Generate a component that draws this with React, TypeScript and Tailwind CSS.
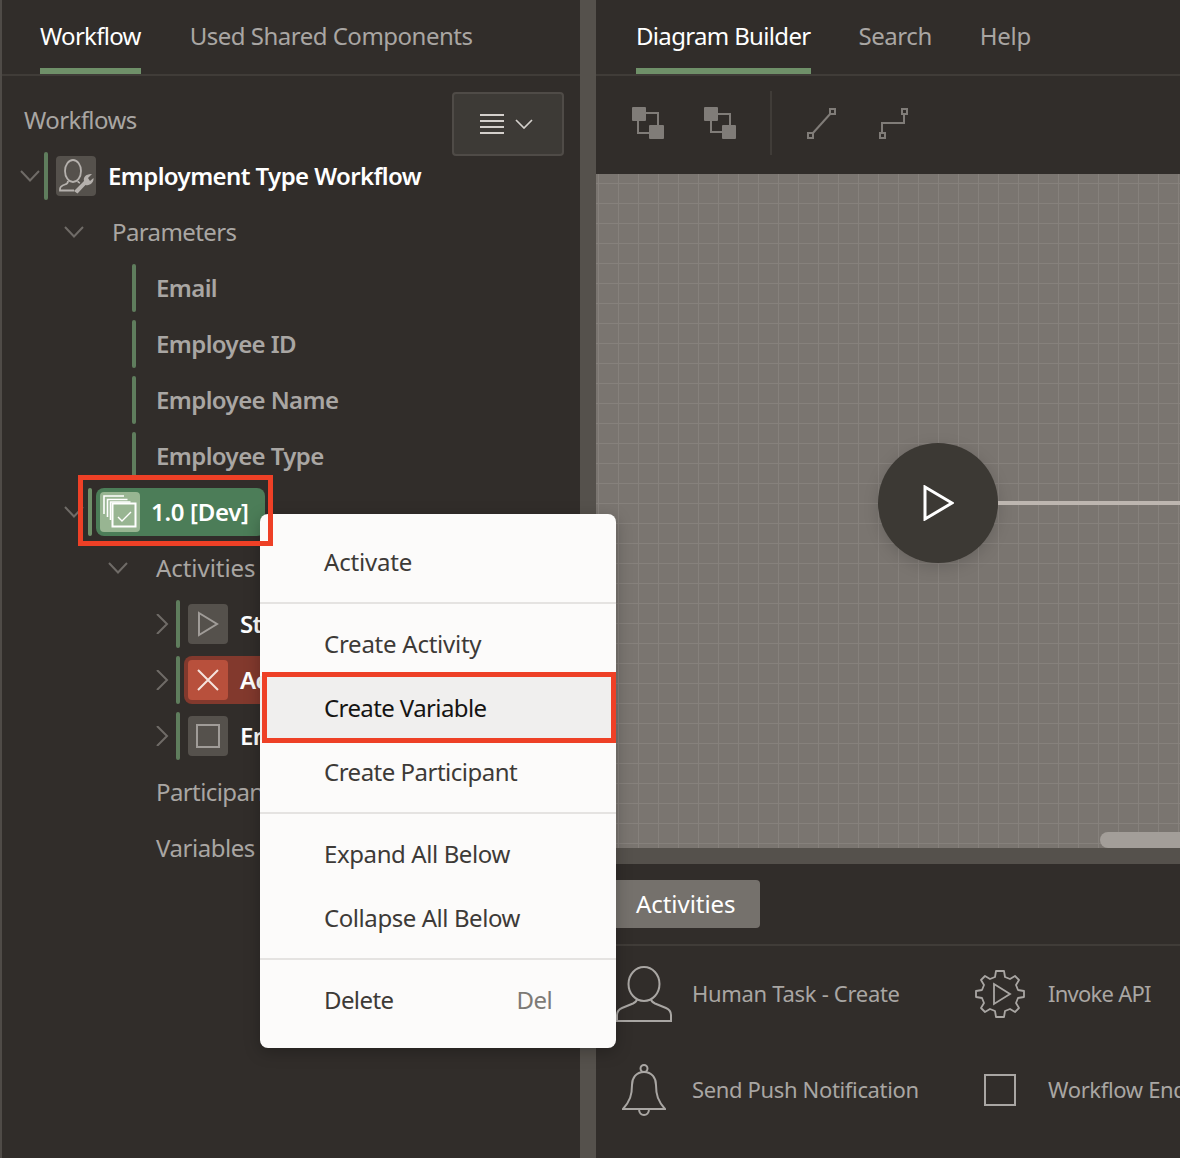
const Chev = ({ open, className }: { open?: boolean; className?: string }) => (
  <svg viewBox="0 0 20 20" className={"w-5 h-5 " + (className ?? "")} fill="none" stroke="#6f6b67" strokeWidth="2">
    {open ? <polyline points="1,5 10,14.5 19,5" /> : <polyline points="5,0 15,10 5,20" />}
  </svg>
);

const Bar = ({ dim }: { dim?: boolean }) => (
  <div className={"w-1 h-12 rounded-sm shrink-0 " + (dim ? "bg-[#5f7d5d]" : "bg-[#6b8a65]")} />
);

const Row = ({ children }: { children: React.ReactNode }) => (
  <div className="h-14 flex items-center relative">{children}</div>
);

const TreeIconBox = ({ className, children }: { className: string; children: React.ReactNode }) => (
  <div className={"w-10 h-10 rounded flex items-center justify-center shrink-0 " + className}>{children}</div>
);

const Param = ({ label }: { label: string }) => (
  <Row>
    <div className="ml-[130px]"><Bar dim /></div>
    <span className="ml-5 font-semibold text-[#a9a6a3]">{label}</span>
  </Row>
);

const Tab = ({ label, active, className }: { label: string; active?: boolean; className?: string }) => (
  <div className={"h-[74px] flex items-center pt-[4px] border-b-[6px] " + (active ? "text-white border-[#6f9069] " : "text-[#a9a6a3] border-transparent ") + (className ?? "")}>
    {label}
  </div>
);

const MenuItem = ({ label, shortcut, hover, className }: { label: string; shortcut?: string; hover?: boolean; className?: string }) => (
  <div className={"h-16 flex items-center justify-between pl-16 pr-16 " + (hover ? "bg-[#f0efee] text-[#161513]" : "text-[#3d3a37]")}>
    <span className={className}>{label}</span>
    {shortcut && <span className="text-[#7d7a76]">{shortcut}</span>}
  </div>
);

const Sep = () => <div className="h-[2px] my-2 bg-[#e5e3e1]" />;

export default function App() {
  return (
    <div
      className="relative w-[1180px] h-[1158px] overflow-hidden flex bg-[#312d2a] text-[24px] leading-8 tracking-[-0.6px]"
      style={{ fontFamily: '"Noto Sans", sans-serif' }}
    >
      {/* Left panel */}
      <div className="w-[580px] shrink-0 border-l-2 border-[#4f4b47]">
        <div className="h-[76px] flex gap-12 pl-[38px] border-b-2 border-[#403c38]">
          <Tab label="Workflow" active className="tracking-[-0.72px]" />
          <Tab label="Used Shared Components" className="tracking-[-0.5px] ml-[1px]" />
        </div>
        <div className="h-[72px] flex items-start justify-between pl-[22px] pr-4 pt-4">
          <span className="mt-[12px] text-[#a9a6a3]">Workflows</span>
          <div className="w-28 h-16 shrink-0 rounded bg-[#3d3a36] border-2 border-[#4f4b47] flex items-center justify-center gap-[11px] pr-1">
            <svg viewBox="0 0 24 20" className="w-6 h-5" stroke="#d4d0cc" strokeWidth="2">
              <path d="M0 1H24M0 7H24M0 13H24M0 19H24" />
            </svg>
            <svg viewBox="0 0 18 10" className="w-[18px] h-[10px]" fill="none" stroke="#d4d0cc" strokeWidth="1.700">
              <polyline points="1,1 9,9 17,1" />
            </svg>
          </div>
        </div>

        <Row>
          <Chev open className="ml-[18px]" />
          <div className="ml-[4px]"><Bar dim /></div>
          <TreeIconBox className="ml-2 bg-[#55514c]">
            <svg viewBox="0 0 40 40" className="w-10 h-10" fill="none" stroke="#b5b1ad" strokeWidth="1.800">
              <ellipse cx="17" cy="15" rx="8" ry="11" />
              <path d="M12 25c0 2-1 3-3 3.500-3 1-5 2-5 4.500v1.500h14" />
              <path d="M22 25c0 1 .5 1.500 2 2" />
              <path d="M18 35l10-10c-1-3.500 2-7.500 8-7l-4 4 2 3 3.500-3c.5 4.500-3.500 8-8 7l-8 8.500z" fill="#b5b1ad" stroke="none" />
            </svg>
          </TreeIconBox>
          <span className="ml-3 font-semibold text-white">Employment Type Workflow</span>
        </Row>
        <Row>
          <Chev open className="ml-[62px]" />
          <span className="ml-[28px] text-[#a9a6a3]">Parameters</span>
        </Row>
        <Param label="Email" />
        <Param label="Employee ID" />
        <Param label="Employee Name" />
        <Param label="Employee Type" />
        <Row>
          <Chev open className="ml-[62px]" />
          <div className="ml-[4px] w-1 h-12 rounded-sm bg-[#6f9069]" />
          <div className="ml-1 w-[169px] h-12 rounded-lg bg-[#4c7d58] flex items-center pl-1">
            <TreeIconBox className="bg-[#98b592]">
              <svg viewBox="0 0 40 40" className="w-10 h-10" fill="none" stroke="#ffffff" strokeWidth="1.600">
                <path d="M4 22V4h20" />
                <path d="M7.500 25V7.500h20" />
                <path d="M10.500 28V10h20" />
                <rect x="12.500" y="11.500" width="23" height="23" strokeWidth="2" fill="#98b592" />
                <polyline points="18,25 22,29 31,20" strokeWidth="1.400" />
              </svg>
            </TreeIconBox>
            <span className="ml-[11px] font-semibold text-white tracking-[-0.3px]">1.0 [Dev]</span>
          </div>
        </Row>
        <Row>
          <Chev open className="ml-[106px]" />
          <span className="ml-[28px] text-[#a9a6a3] tracking-[-0.05px]">Activities</span>
        </Row>
        <Row>
          <Chev className="ml-[150px]" />
          <div className="ml-1"><Bar dim /></div>
          <TreeIconBox className="ml-2 bg-[#55514c]">
            <svg viewBox="0 0 40 40" className="w-10 h-10" fill="none" stroke="#a09c98" strokeWidth="2">
              <polygon points="11,9 29,20 11,31" />
            </svg>
          </TreeIconBox>
          <span className="ml-3 font-semibold text-white">Start</span>
        </Row>
        <Row>
          <Chev className="ml-[150px]" />
          <div className="ml-1"><Bar dim /></div>
          <div className="ml-1 w-[120px] h-12 rounded-lg bg-[#82392d] flex items-center pl-1">
            <TreeIconBox className="bg-[#b8503c]">
              <svg viewBox="0 0 40 40" className="w-10 h-10" fill="none" stroke="#f5e3de" strokeWidth="2">
                <path d="M10 10L30 30M30 10L10 30" />
              </svg>
            </TreeIconBox>
            <span className="ml-3 font-semibold text-white">Activity</span>
          </div>
        </Row>
        <Row>
          <Chev className="ml-[150px]" />
          <div className="ml-1"><Bar dim /></div>
          <TreeIconBox className="ml-2 bg-[#55514c]">
            <svg viewBox="0 0 40 40" className="w-10 h-10" fill="none" stroke="#a09c98" strokeWidth="2">
              <rect x="9" y="9" width="22" height="22" />
            </svg>
          </TreeIconBox>
          <span className="ml-3 font-semibold text-white">End</span>
        </Row>
        <Row><span className="ml-[154px] text-[#a9a6a3]">Participants</span></Row>
        <Row><span className="ml-[154px] text-[#a9a6a3] tracking-[-0.45px]">Variables</span></Row>
      </div>

      {/* Splitter */}
      <div className="w-4 shrink-0 bg-[#55514c]" />

      {/* Right panel */}
      <div className="flex-1 min-w-0 flex flex-col">
        <div className="h-[76px] shrink-0 flex gap-12 pl-10 border-b-2 border-[#403c38]">
          <Tab label="Diagram Builder" active className="tracking-[-0.67px]" />
          <Tab label="Search" className="tracking-[-0.45px]" />
          <Tab label="Help" className="tracking-[-0.3px]" />
        </div>
        <div className="h-[98px] shrink-0 flex items-center pl-9 pb-[4px]">
          <svg viewBox="0 0 32 32" className="w-8 h-8 shrink-0">
            <rect x="6" y="6" width="20" height="20" fill="none" stroke="#807c78" strokeWidth="2" />
            <rect x="0" y="0" width="14" height="14" rx="1" fill="#807c78" />
            <rect x="17" y="18" width="15" height="14" rx="1" fill="#807c78" />
          </svg>
          <svg viewBox="0 0 32 32" className="w-8 h-8 shrink-0 ml-10">
            <path d="M14 7H26V18M7 14V25H18" fill="none" stroke="#807c78" strokeWidth="2" />
            <rect x="0" y="0" width="14" height="14" rx="1" fill="#807c78" />
            <rect x="18" y="18" width="14" height="14" rx="1" fill="#807c78" />
          </svg>
          <div className="w-[2px] h-16 ml-[34px] bg-[#403c38]" />
          <svg viewBox="0 0 32 32" className="w-8 h-8 shrink-0 ml-[33px]" fill="none" stroke="#807c78" strokeWidth="2">
            <path d="M8 26L26 6" />
            <rect x="25" y="2" width="5" height="5" />
            <rect x="3" y="26" width="5" height="5" />
          </svg>
          <svg viewBox="0 0 32 32" className="w-8 h-8 shrink-0 ml-10" fill="none" stroke="#807c78" strokeWidth="2">
            <path d="M27 7V16H5V26" />
            <rect x="25" y="2" width="5" height="5" />
            <rect x="3" y="26" width="5" height="5" />
          </svg>
        </div>

        <div className="h-[674px] shrink-0 relative bg-[#7a7570] bg-[linear-gradient(#86817c_1px,transparent_1px),linear-gradient(90deg,#86817c_1px,transparent_1px)] bg-[size:20px_20px] bg-[position:2px_9px]">
          <div className="absolute left-[282px] top-[269px] w-[120px] h-[120px] rounded-full bg-[#3c3934] shadow-[0_4px_16px_rgba(0,0,0,0.15)] flex items-center justify-center">
            <svg viewBox="0 0 32 36" className="w-8 h-9" fill="none" stroke="#ffffff" strokeWidth="3">
              <polygon points="3,2 30,18 3,34" />
            </svg>
          </div>
          <div className="absolute left-[402px] right-0 top-[327px] h-1 bg-[#bdb6b0]" />
          <div className="absolute left-[504px] right-0 bottom-0 h-4 rounded-l-lg bg-[#a39e99]" />
        </div>
        <div className="h-4 shrink-0 bg-[#55514c]" />

        <div className="h-[82px] shrink-0 border-b-2 border-[#403c38] pt-4 pl-4">
          <div className="inline-flex h-12 items-center px-6 rounded bg-[#75716c] text-white w-[148px] tracking-[-0.05px]">Activities</div>
        </div>

        <div className="flex-1 grid grid-cols-[356px_1fr] grid-rows-[96px_96px] text-[22px] tracking-[-0.35px]">
          <div className="flex items-center pl-5">
            <svg viewBox="0 0 56 56" className="w-14 h-14 shrink-0" fill="none" stroke="#a9a6a3" strokeWidth="2">
              <ellipse cx="28" cy="18" rx="15.500" ry="17" />
              <path d="M21 33c0 2-1 3-4 4.500L6 42c-3 1.300-5 3.500-5 7v6h54v-6c0-3.500-2-5.700-5-7l-11-4.500c-3-1.500-4-2.500-4-4.500" />
            </svg>
            <span className="ml-5 mb-[2px] text-[#a9a6a3] tracking-[-0.3px]">Human Task - Create</span>
          </div>
          <div className="flex items-center">
            <svg viewBox="0 0 50 50" className="w-[50px] h-[50px] shrink-0 ml-[23px]" fill="none" stroke="#a9a6a3" strokeWidth="1.800">
              <path d="M21 2l-1 6-5 2-5-3-4 4 3 5-2 5-6 1v6l6 1 2 5-3 5 4 4 5-3 5 2 1 6h8l1-6 5-2 5 3 4-4-3-5 2-5 6-1v-6l-6-1-2-5 3-5-4-4-5 3-5-2-1-6z" strokeLinejoin="round" />
              <polygon points="19,15 35,25 19,35" />
            </svg>
            <span className="ml-[23px] mb-[2px] text-[#a9a6a3] whitespace-nowrap tracking-[-0.75px]">Invoke API</span>
          </div>
          <div className="flex items-center pl-[26px]">
            <svg viewBox="0 0 44 52" className="w-11 h-[52px] shrink-0" fill="none" stroke="#a9a6a3" strokeWidth="2">
              <circle cx="22" cy="4.500" r="3.500" />
              <path d="M22 8c-8 0-12 6-12 13 0 10-2 16-9 24h42c-7-8-9-14-9-24 0-7-4-13-12-13z" />
              <path d="M17 45c0 8 10 8 10 0" />
            </svg>
            <span className="ml-[26px] mb-[2px] text-[#a9a6a3]">Send Push Notification</span>
          </div>
          <div className="flex items-center">
            <div className="ml-8 w-8 h-8 shrink-0 border-2 border-[#a9a6a3]" />
            <span className="ml-8 mb-[2px] text-[#a9a6a3] whitespace-nowrap">Workflow End</span>
          </div>
        </div>
      </div>

      {/* Context menu */}
      <div className="absolute left-[260px] top-[514px] w-[356px] rounded-lg bg-[#fcfbfa] py-4 shadow-[0_4px_16px_rgba(0,0,0,0.25)]">
        <MenuItem label="Activate" className="tracking-[-0.2px]" />
        <Sep />
        <MenuItem label="Create Activity" className="tracking-[-0.25px]" />
        <MenuItem label="Create Variable" hover />
        <MenuItem label="Create Participant" className="tracking-[-0.5px]" />
        <Sep />
        <MenuItem label="Expand All Below" className="tracking-[-0.4px]" />
        <MenuItem label="Collapse All Below" className="tracking-[-0.43px]" />
        <Sep />
        <MenuItem label="Delete" shortcut="Del" />
      </div>

      {/* Callout boxes */}
      <div className="absolute left-[78px] top-[475px] w-[195px] h-[71px] border-[5px] border-[#ee4026] pointer-events-none" />
      <div className="absolute left-[262px] top-[672px] w-[354px] h-[71px] border-[5px] border-[#ee4026] pointer-events-none" />
    </div>
  );
}
